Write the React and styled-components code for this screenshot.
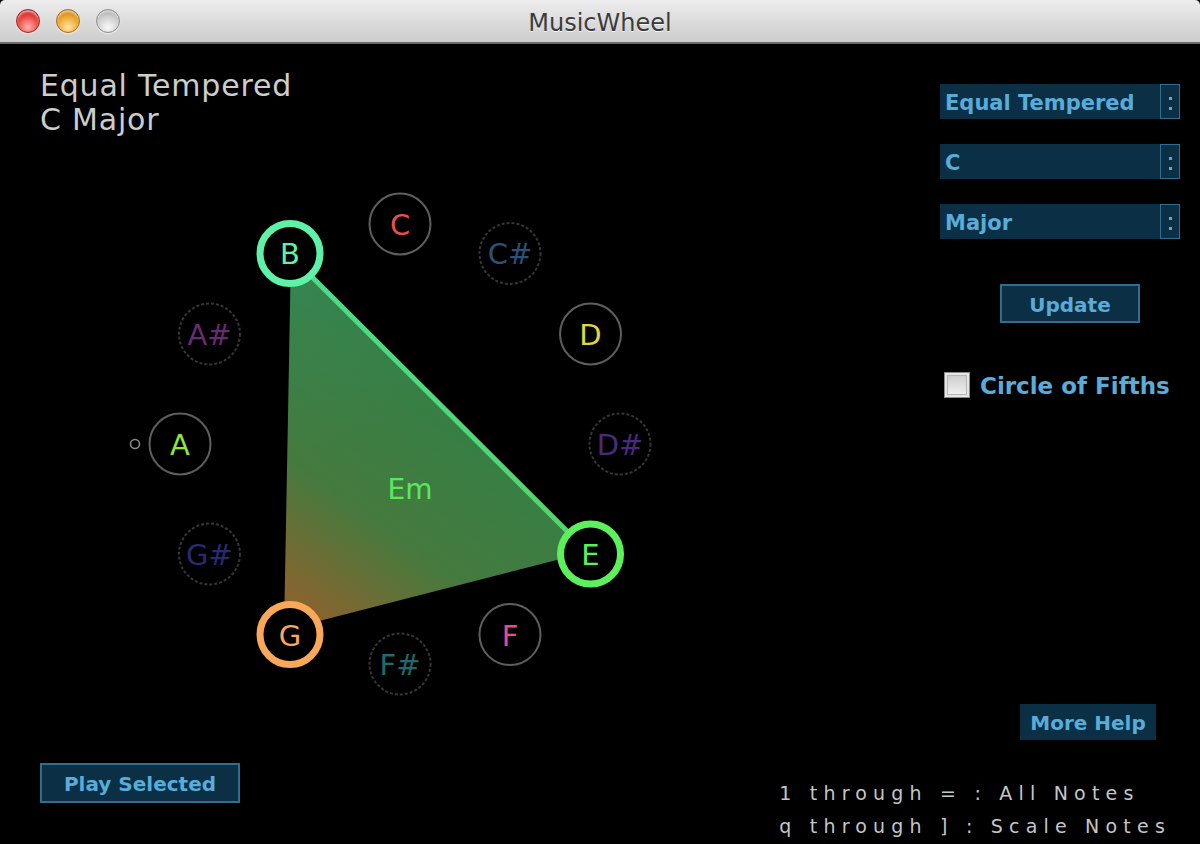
import React from "react";
import styled, { createGlobalStyle } from "styled-components";

const GlobalStyle = createGlobalStyle`
  html, body { margin: 0; padding: 0; background: #000; }
  body { font-family: "DejaVu Sans", "Liberation Sans", sans-serif; }
  * { box-sizing: border-box; }
`;

const BLUE_BG = "#0b2f45";
const BLUE_BORDER = "#2e6f8e";
const BLUE_TEXT = "#5aacd8";

const Window = styled.div`
  width: 1200px;
  height: 844px;
  display: flex;
  flex-direction: column;
  background: #000;
  overflow: hidden;
`;

const TitleBar = styled.div`
  height: 44px;
  flex: none;
  display: grid;
  grid-template-columns: 1fr auto 1fr;
  align-items: center;
  background: linear-gradient(#ededed, #d9d9d9 60%, #cdcdcd);
  border-bottom: 2px solid #6b6b6b;
  border-radius: 5px 5px 0 0;
`;

const Lights = styled.div`
  display: flex;
  gap: 16px;
  padding-left: 16px;
`;

const lightColors = {
  red: ["#ffb3ad", "#e8443c", "#a81d18"],
  yellow: ["#ffe3a6", "#eaa42c", "#ad6a0c"],
  gray: ["#fafafa", "#cdcdcd", "#8d8d8d"],
};

const Light = styled.span`
  width: 24px;
  height: 24px;
  border-radius: 50%;
  border: 1px solid ${(p) => lightColors[p.$tone][2]};
  background: radial-gradient(
    circle at 50% 78%,
    ${(p) => lightColors[p.$tone][0]} 0%,
    ${(p) => lightColors[p.$tone][1]} 55%,
    ${(p) => lightColors[p.$tone][2]} 100%
  );
  box-shadow: inset 0 2px 2px rgba(255, 255, 255, 0.6), 0 1px 1px rgba(255, 255, 255, 0.7);
`;

const Title = styled.div`
  font-size: 24px;
  color: #3b3b3b;
  text-shadow: 0 1px 0 rgba(255, 255, 255, 0.8);
  padding-top: 3px;
`;

const Body = styled.div`
  flex: 1;
  display: flex;
  background: #000;
`;

const LeftPane = styled.div`
  width: 730px;
  flex: none;
  display: flex;
  flex-direction: column;
  align-items: flex-start;
  padding: 25px 0 41px 40px;
`;

const Heading = styled.div`
  font-size: 30px;
  line-height: 34px;
  letter-spacing: 0.8px;
  color: #cdcdcd;
`;

const WheelSvg = styled.svg`
  display: block;
  margin-top: 13px;
`;

const BlueButton = styled.button`
  font-family: inherit;
  font-weight: bold;
  font-size: 20px;
  color: ${BLUE_TEXT};
  background: ${BLUE_BG};
  border: ${(p) => (p.$plain ? "none" : `2px solid ${BLUE_BORDER}`)};
  width: ${(p) => p.$w}px;
  height: ${(p) => p.$h}px;
  padding: 2px 0 0;
  display: flex;
  align-items: center;
  justify-content: center;
`;

const PlayButton = styled(BlueButton)`
  margin-top: auto;
`;

const RightPane = styled.div`
  flex: 1;
  display: flex;
  flex-direction: column;
  align-items: flex-end;
  padding: 40px 20px 1px 0;
`;

const Select = styled.div`
  width: 240px;
  height: 35px;
  display: flex;
  background: ${BLUE_BG};
  margin-bottom: 25px;
`;

const SelectLabel = styled.div`
  flex: 1;
  padding: 3px 0 0 5px;
  font-weight: bold;
  font-size: 21px;
  line-height: 32px;
  color: ${BLUE_TEXT};
  white-space: nowrap;
`;

const SelectArrow = styled.div`
  width: 20px;
  height: 35px;
  border: 1px solid ${BLUE_BORDER};
  display: flex;
  flex-direction: column;
  align-items: center;
  justify-content: center;
  gap: 7px;
  padding-top: 3px;
`;

const Dot = styled.span`
  width: 3px;
  height: 3px;
  background: ${BLUE_TEXT};
`;

const UpdateButton = styled(BlueButton)`
  margin: 20px 40px 0 0;
`;

const CheckRow = styled.label`
  width: 240px;
  margin-top: 47px;
  padding-left: 4px;
  display: flex;
  align-items: center;
  gap: 10px;
`;

const CheckBox = styled.span`
  width: 26px;
  height: 26px;
  border: 1px solid #8a8a8a;
  background: linear-gradient(#c9c9c9, #f4f4f4);
  box-shadow: inset 0 0 0 2px #e6e6e6, inset 0 0 0 3px #b5b5b5;
`;

const CheckText = styled.span`
  font-weight: bold;
  font-size: 23px;
  color: ${BLUE_TEXT};
  white-space: nowrap;
  padding-top: 3px;
`;

const Spacer = styled.div`
  flex: 1;
`;

const HelpButton = styled(BlueButton)`
  margin-right: 24px;
`;

const HelpText = styled.div`
  margin: 37px 9px 0 0;
  font-size: 19px;
  line-height: 33px;
  letter-spacing: 6.2px;
  color: #c6c6c6;
  white-space: pre;
`;

const CX = 400;
const CY = 444;
const R = 220;

const notes = [
  { n: "C", color: "#e8504a", kind: "scale" },
  { n: "C#", color: "#2c5078", kind: "sharp" },
  { n: "D", color: "#e0d83a", kind: "scale" },
  { n: "D#", color: "#4a2a7a", kind: "sharp" },
  { n: "E", color: "#5cf05c", kind: "sel" },
  { n: "F", color: "#e8489a", kind: "scale" },
  { n: "F#", color: "#1f6a6c", kind: "sharp" },
  { n: "G", color: "#f8a858", kind: "sel" },
  { n: "G#", color: "#2a2a72", kind: "sharp" },
  { n: "A", color: "#90e838", kind: "scale" },
  { n: "A#", color: "#6a2a72", kind: "sharp" },
  { n: "B", color: "#5ef2a8", kind: "sel" },
];

function Wheel() {
  const pos = (i) => {
    const a = (i * Math.PI) / 6;
    return [CX + R * Math.sin(a), CY - R * Math.cos(a)];
  };
  const B = [291, 256];
  const E = [588, 552];
  const G = [284, 630];
  return (
    <WheelSvg width="680" height="560" viewBox="40 150 680 560">
      <defs>
        <linearGradient id="triFill" gradientUnits="userSpaceOnUse" x1="284" y1="630" x2="450" y2="400">
          <stop offset="0" stopColor="#9a5e2a" />
          <stop offset="0.5" stopColor="#457a3e" />
          <stop offset="1" stopColor="#357f45" />
        </linearGradient>
        <radialGradient id="bGlow" gradientUnits="userSpaceOnUse" cx="291" cy="256" r="200">
          <stop offset="0" stopColor="#3a8a5c" stopOpacity="0.5" />
          <stop offset="1" stopColor="#3a8a5c" stopOpacity="0" />
        </radialGradient>
        <linearGradient id="edge" gradientUnits="userSpaceOnUse" x1="291" y1="256" x2="588" y2="552">
          <stop offset="0" stopColor="#52d98e" />
          <stop offset="1" stopColor="#4fd764" />
        </linearGradient>
      </defs>
      <polygon points={`${B} ${E} ${G}`} fill="url(#triFill)" />
      <polygon points={`${B} ${E} ${G}`} fill="url(#bGlow)" />
      <line x1={B[0]} y1={B[1]} x2={E[0]} y2={E[1]} stroke="url(#edge)" strokeWidth="5" />
      <text x="410" y="499" textAnchor="middle" fontSize="28" fill="#5ce85c" fontFamily="DejaVu Sans, sans-serif">
        Em
      </text>
      <circle cx="135" cy="444" r="4.5" fill="none" stroke="#8a8a8a" strokeWidth="1.6" />
      {notes.map((note, i) => {
        const [x, y] = pos(i);
        const sel = note.kind === "sel";
        return (
          <g key={note.n}>
            <circle
              cx={x}
              cy={y}
              r={sel ? 30 : 30.5}
              fill="#000"
              stroke={sel ? note.color : note.kind === "scale" ? "#5e5e5e" : "#363636"}
              strokeWidth={sel ? 7 : 2}
              strokeDasharray={note.kind === "sharp" ? "3 2" : undefined}
            />
            <text
              x={x}
              y={y + 11}
              textAnchor="middle"
              fontSize="29"
              fill={note.color}
              fontFamily="DejaVu Sans, sans-serif"
            >
              {note.n}
            </text>
          </g>
        );
      })}
    </WheelSvg>
  );
}

function Dropdown({ label }) {
  return (
    <Select>
      <SelectLabel>{label}</SelectLabel>
      <SelectArrow>
        <Dot />
        <Dot />
      </SelectArrow>
    </Select>
  );
}

export default function App() {
  return (
    <>
      <GlobalStyle />
      <Window>
        <TitleBar>
          <Lights>
            <Light $tone="red" />
            <Light $tone="yellow" />
            <Light $tone="gray" />
          </Lights>
          <Title>MusicWheel</Title>
          <div />
        </TitleBar>
        <Body>
          <LeftPane>
            <Heading>
              <div>Equal Tempered</div>
              <div>C Major</div>
            </Heading>
            <Wheel />
            <PlayButton $w={200} $h={40}>Play Selected</PlayButton>
          </LeftPane>
          <RightPane>
            <Dropdown label="Equal Tempered" />
            <Dropdown label="C" />
            <Dropdown label="Major" />
            <UpdateButton $w={140} $h={39}>Update</UpdateButton>
            <CheckRow>
              <CheckBox />
              <CheckText>Circle of Fifths</CheckText>
            </CheckRow>
            <Spacer />
            <HelpButton $w={136} $h={36} $plain>More Help</HelpButton>
            <HelpText>{"1 through = : All Notes\nq through ] : Scale Notes"}</HelpText>
          </RightPane>
        </Body>
      </Window>
    </>
  );
}
